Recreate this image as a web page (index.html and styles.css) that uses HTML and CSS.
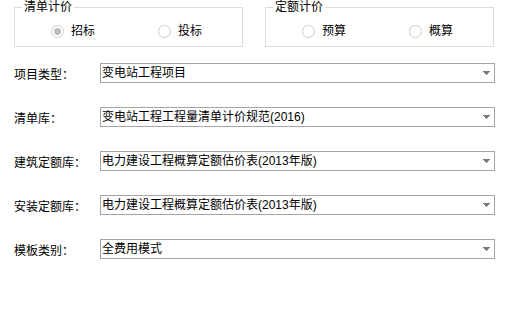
FILE: index.html
```html
<!DOCTYPE html>
<html lang="zh-CN">
<head>
<meta charset="utf-8">
<title>工程设置</title>
<link rel="stylesheet" href="styles.css">
</head>
<body>
<div class="top">
  <fieldset class="group">
    <legend>清单计价</legend>
    <div class="radios">
      <label class="radio"><span class="dot checked"></span><span>招标</span></label>
      <label class="radio"><span class="dot"></span><span>投标</span></label>
    </div>
  </fieldset>
  <fieldset class="group">
    <legend>定额计价</legend>
    <div class="radios">
      <label class="radio"><span class="dot"></span><span>预算</span></label>
      <label class="radio"><span class="dot"></span><span>概算</span></label>
    </div>
  </fieldset>
</div>
<div class="form">
  <div class="row">
    <span class="label">项目类型：</span>
    <div class="select"><span class="value">变电站工程项目</span><svg class="arrow" width="7" height="4" viewBox="0 0 7 4" shape-rendering="crispEdges"><rect x="0" y="0" width="7" height="1"/><rect x="1" y="1" width="5" height="1"/><rect x="2" y="2" width="3" height="1"/><rect x="3" y="3" width="1" height="1"/></svg></div>
  </div>
  <div class="row">
    <span class="label">清单库：</span>
    <div class="select"><span class="value">变电站工程工程量清单计价规范(2016)</span><svg class="arrow" width="7" height="4" viewBox="0 0 7 4" shape-rendering="crispEdges"><rect x="0" y="0" width="7" height="1"/><rect x="1" y="1" width="5" height="1"/><rect x="2" y="2" width="3" height="1"/><rect x="3" y="3" width="1" height="1"/></svg></div>
  </div>
  <div class="row">
    <span class="label">建筑定额库：</span>
    <div class="select"><span class="value">电力建设工程概算定额估价表(2013年版)</span><svg class="arrow" width="7" height="4" viewBox="0 0 7 4" shape-rendering="crispEdges"><rect x="0" y="0" width="7" height="1"/><rect x="1" y="1" width="5" height="1"/><rect x="2" y="2" width="3" height="1"/><rect x="3" y="3" width="1" height="1"/></svg></div>
  </div>
  <div class="row">
    <span class="label">安装定额库：</span>
    <div class="select"><span class="value">电力建设工程概算定额估价表(2013年版)</span><svg class="arrow" width="7" height="4" viewBox="0 0 7 4" shape-rendering="crispEdges"><rect x="0" y="0" width="7" height="1"/><rect x="1" y="1" width="5" height="1"/><rect x="2" y="2" width="3" height="1"/><rect x="3" y="3" width="1" height="1"/></svg></div>
  </div>
  <div class="row">
    <span class="label">模板类别：</span>
    <div class="select"><span class="value">全费用模式</span><svg class="arrow" width="7" height="4" viewBox="0 0 7 4" shape-rendering="crispEdges"><rect x="0" y="0" width="7" height="1"/><rect x="1" y="1" width="5" height="1"/><rect x="2" y="2" width="3" height="1"/><rect x="3" y="3" width="1" height="1"/></svg></div>
  </div>
</div>
</body>
</html>
```
FILE: styles.css
```css
html, body {
  margin: 0;
  padding: 0;
  background: #ffffff;
}
body {
  font-family: "Liberation Sans", "Noto Sans CJK SC", sans-serif;
  font-size: 12px;
  color: #000000;
  width: 524px;
  height: 322px;
  overflow: hidden;
}
.top {
  display: flex;
  gap: 22px;
  padding-left: 14px;
}
.group {
  box-sizing: border-box;
  width: 229px;
  margin: 0;
  padding: 9px 0 8px 0;
  border: 1px solid #dcdcdc;
  min-width: 0;
}
.group legend {
  margin-left: 7px;
  padding: 0 2px;
  line-height: 15px;
  height: 15px;
}
.radios {
  display: grid;
  grid-template-columns: 107px 107px;
  height: 14px;
  align-items: center;
  padding-left: 36px;
}
.radio {
  display: flex;
  align-items: center;
  gap: 7px;
  line-height: 14px;
}
.dot {
  box-sizing: border-box;
  width: 13px;
  height: 13px;
  border: 1px solid #cccccc;
  border-radius: 50%;
  background: #ffffff;
  display: flex;
  align-items: center;
  justify-content: center;
}
.dot.checked::after {
  content: "";
  width: 7px;
  height: 7px;
  border-radius: 50%;
  background: #bdbdbd;
}
.form {
  display: flex;
  flex-direction: column;
  gap: 24px;
  padding-left: 14px;
  margin-top: 16px;
}
.row {
  display: flex;
  align-items: center;
  height: 20px;
}
.label {
  width: 86px;
  flex: none;
}
.select {
  box-sizing: border-box;
  width: 395px;
  height: 20px;
  border: 1px solid #a5a5a5;
  display: flex;
  align-items: center;
  justify-content: space-between;
  padding: 0 4px 0 1px;
}
.value {
  white-space: nowrap;
  line-height: 18px;
}
.arrow {
  fill: #7a7a7a;
  display: block;
}
```
